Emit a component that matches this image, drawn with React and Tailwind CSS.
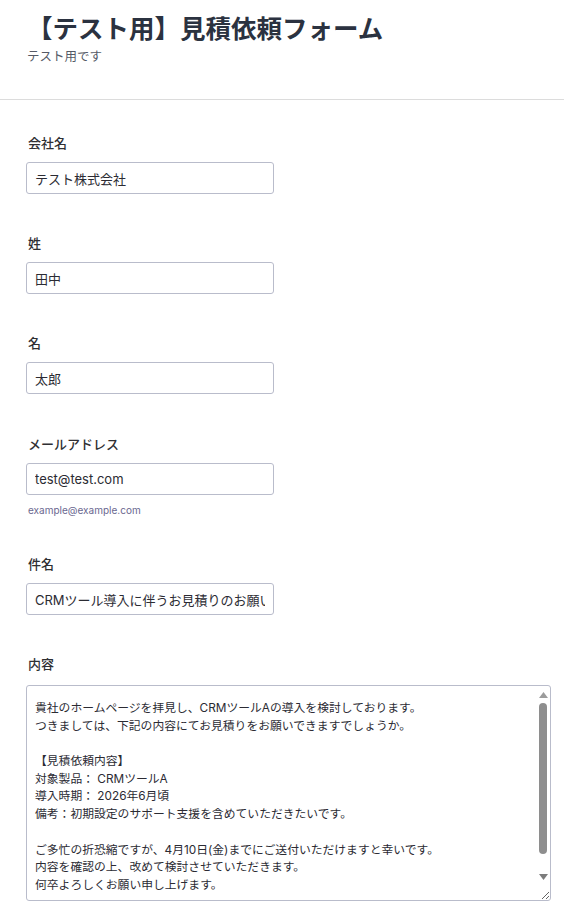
import React from 'react';

const font = { fontFamily: "Inter, 'Noto Sans CJK JP', 'Noto Sans', sans-serif" };

const body = `貴社のホームページを拝見し、CRMツールAの導入を検討しております。
つきましては、下記の内容にてお見積りをお願いできますでしょうか。

【見積依頼内容】
対象製品： CRMツールA
導入時期： 2026年6月頃
備考：初期設定のサポート支援を含めていただきたいです。

ご多忙の折恐縮ですが、4月10日(金)までにご送付いただけますと幸いです。
内容を確認の上、改めて検討させていただきます。
何卒よろしくお願い申し上げます。

テスト株式会社
田中 太郎`;

function Field({ label, value, hint, gap = 'mb-[39px]' }) {
  return (
    <div className={gap}>
      <label className="block pl-[2px] text-[13px] font-medium leading-[20px] text-[#2f2f33] mb-[9px]">{label}</label>
      <input
        type="text"
        defaultValue={value}
        className="block w-[248px] h-[32px] px-2 text-[13px] text-[#2b2b33] border border-[#b9bccb] rounded-[3px] bg-white outline-none"
        style={font}
      />
      {hint && <p className="mt-[7px] pl-[2px] text-[10px] leading-[16px] text-[#6a6890]">{hint}</p>}
    </div>
  );
}

// scrollbar drawn over the message box
function ScrollBar() {
  return (
    <div className="pointer-events-none absolute right-[1px] top-[1px] w-[14px] h-[200px] flex flex-col items-center">
      <svg width="9" height="6" viewBox="0 0 9 6" className="mt-[6px]">
        <polygon points="4.5,0 9,6 0,6" fill="#9c9c9c" />
      </svg>
      <div className="mt-[5px] w-[8px] h-[151px] rounded-full bg-[#8e8e8e]" />
      <svg width="9" height="6" viewBox="0 0 9 6" className="mt-[20px]">
        <polygon points="0,0 9,0 4.5,6" fill="#7c7c7c" />
      </svg>
    </div>
  );
}

export default function App() {
  return (
    <div className="h-[912px] overflow-hidden bg-white" style={font}>
      {/* page header */}
      <header className="h-[100px] border-b border-[#dcdcdc] px-[27px] pt-[11px]">
        <h1 className="text-[25.5px] font-bold leading-[36px] text-[#2b3240]">【テスト用】見積依頼フォーム</h1>
        <p className="mt-[1px] text-[12.5px] leading-[18px] text-[#555a66]">テスト用です</p>
      </header>

      <form className="px-[26px] pt-[33px]">
        <Field label="会社名" value="テスト株式会社" />
        <Field label="姓" value="田中" />
        <Field label="名" value="太郎" gap="mb-[40px]" />
        <Field label="メールアドレス" value="test@test.com" hint="example@example.com" gap="mb-[36px]" />
        <Field label="件名" value="CRMツール導入に伴うお見積りのお願い" />

        <div>
          <label className="block pl-[2px] text-[13px] font-medium leading-[20px] text-[#2f2f33] mb-[11px]">内容</label>
          <div className="relative w-[525px]">
            <textarea
              defaultValue={body}
              className="block w-[525px] h-[216px] pl-2 pr-[18px] pt-[14px] pb-2 text-[11.8px] text-[#2b2b33] border border-[#b9bccb] rounded-[3px] bg-white outline-none resize-y overflow-hidden"
              style={font}
            />
            <ScrollBar />
          </div>
        </div>
      </form>
    </div>
  );
}
